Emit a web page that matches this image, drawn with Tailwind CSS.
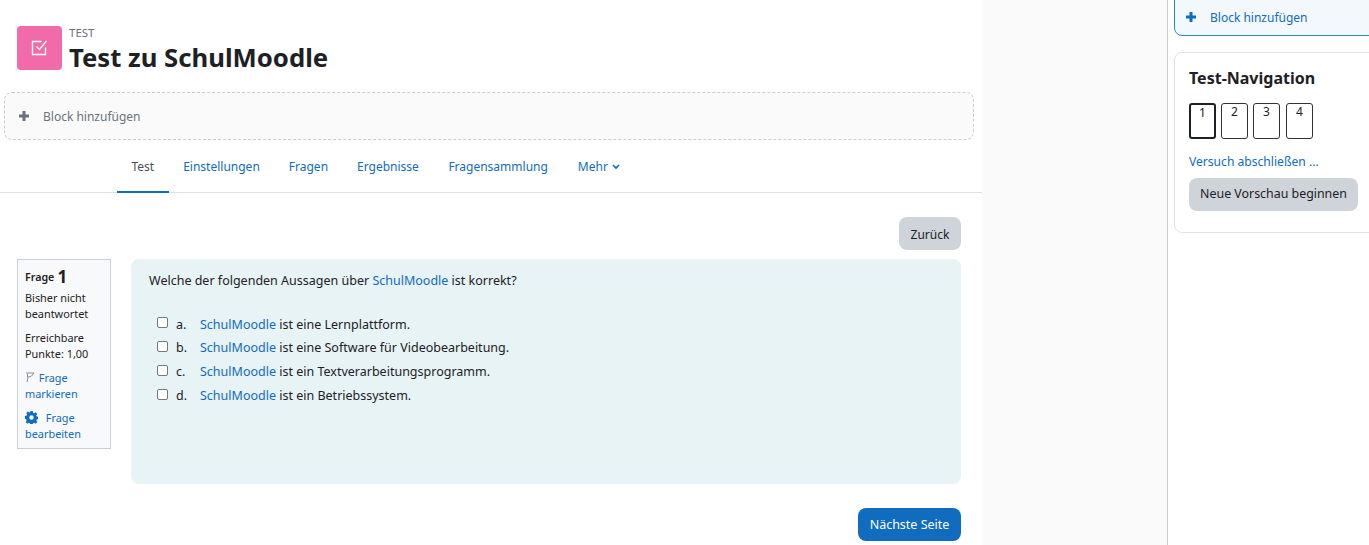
<!DOCTYPE html>
<html lang="de">
<head>
  <meta charset="UTF-8">
  <title>Test zu SchulMoodle</title>
  <script src="https://cdn.jsdelivr.net/npm/@tailwindcss/browser@4"></script>
</head>
<body class="bg-white h-[545px] overflow-hidden font-['Noto_Sans',sans-serif] text-[12.5px] text-[#1d2125]">
  <div class="flex h-[545px]">
    <!-- main column -->
    <div class="w-[982px] shrink-0 bg-white">
      <div class="flex items-start gap-[7px] pl-[17px] pt-[26px]">
        <div class="w-[45px] h-[44px] rounded-[4px] bg-[#f06ba8] flex items-center justify-center">
          <svg width="18" height="18" viewBox="0 0 18 18" fill="none" stroke="#fff" stroke-width="1.4"><path d="M14.5 8.5v7h-13v-13h9"/><path d="M5.500 8l3 3 7-8.500" transform="translate(0 -.5)"/></svg>
        </div>
        <div>
          <div class="text-[11.500px] leading-[14px] text-[#6a737b]">TEST</div>
          <h1 class="text-[25.700px] leading-[35px] font-bold">Test zu SchulMoodle</h1>
        </div>
      </div>

      <div class="mt-[17px] ml-[4px] w-[970px] h-[48px] rounded-[8px] border border-dashed border-[#ccc] bg-[#fafafa] flex items-center pl-[13px] text-[#6a737b] text-[12px]">
        <svg width="12" height="12" viewBox="0 0 12 12" fill="#6a737b"><path d="M4.500 1h3v3.500H11v3H7.500V11h-3V7.500H1v-3h3.500z"/></svg>
        <span class="ml-[13px] pt-[2px]">Block hinzufügen</span>
      </div>

      <nav class="flex h-[53px] border-b border-[#dee2e6] pl-[117px] pt-[2px] text-[#0f6cbf] text-[12px]">
        <a class="relative px-[14.500px] flex items-center text-[#495057]">Test<span class="absolute left-0 right-0 -bottom-px h-[2px] bg-[#0f6cbf]"></span></a>
        <a class="px-[14.500px] flex items-center">Einstellungen</a>
        <a class="px-[14.500px] flex items-center">Fragen</a>
        <a class="px-[14.500px] flex items-center">Ergebnisse</a>
        <a class="pl-[15px] pr-[14.500px] flex items-center">Fragensammlung</a>
        <a class="pl-[15.500px] pr-[14.500px] flex items-center gap-[4px]">Mehr
          <svg width="8" height="6" viewBox="0 0 8 6" fill="none" stroke="#0f6cbf" stroke-width="1.6"><path d="M1 1l3 3 3-3"/></svg>
        </a>
      </nav>

      <div class="flex justify-end pr-[21px] pt-[24px]">
        <button class="h-[33px] w-[62px] rounded-[8px] bg-[#ced4da] text-[12px] pt-[3px]">Zurück</button>
      </div>

      <div class="flex items-start gap-[20px] pl-[17px] pr-[21px] pt-[9px]">
        <div class="w-[94px] h-[190px] shrink-0 border border-[#cad0d7] bg-[#f8f9fa] px-[7px] pt-[7px] text-[10.900px] leading-[16px]">
          <div class="font-semibold flex items-center gap-[3px] h-[20px] text-[10.700px]">Frage <span class="text-[17px] font-bold">1</span></div>
          <div class="mt-[3px]">Bisher nicht beantwortet</div>
          <div class="mt-[8px]">Erreichbare Punkte: 1,00</div>
          <div class="mt-[8px] text-[#0f6cbf]">
            <svg class="inline align-[-1px] mr-[1px]" width="10" height="11" viewBox="0 0 10 11" fill="none" stroke="#8a8f94"><path d="M1 1h8L6 4.500 3 5 2 10"/><path d="M2.500 2v3"/></svg>
            Frage markieren
          </div>
          <div class="mt-[8px] text-[#0f6cbf]">
            <svg class="inline align-[-2px] mr-[5px]" width="13" height="13" viewBox="0 0 13 13" fill="#0f6cbf"><path fill-rule="evenodd" d="M5.300 0h2.400l.4 1.800 1 .4 1.500-1 1.700 1.700-1 1.500.5 1 1.700.4v2.400l-1.700.4-.5 1 1 1.500-1.700 1.700-1.500-1-1 .4-.4 1.800H5.300l-.4-1.800-1-.4-1.500 1-1.700-1.700 1-1.500-.5-1L0 7.400V5l1.700-.4.5-1-1-1.500 1.700-1.700 1.500 1 1-.4zM6.500 4.300a2.200 2.200 0 1 0 0 4.400 2.200 2.200 0 1 0 0-4.400z"/></svg>
            Frage bearbeiten
          </div>
        </div>

        <div class="w-[830px] h-[225px] rounded-[8px] bg-[#e7f3f5] pl-[18px] pt-[12px]">
          <p class="leading-[19px]">Welche der folgenden Aussagen über <a class="text-[#0f6cbf]">SchulMoodle</a> ist korrekt?</p>
          <div class="mt-[23px] pl-[8px] flex flex-col">
            <label class="flex items-center h-[23px] pt-px"><input type="checkbox" class="w-[11px] h-[11px] appearance-none bg-white border border-[#767676] rounded-[2px] -mt-[5px]"><span class="ml-[8px] w-[24px]">a.</span><span><a class="text-[#0f6cbf]">SchulMoodle</a> ist eine Lernplattform.</span></label>
            <label class="flex items-center h-[24px]"><input type="checkbox" class="w-[11px] h-[11px] appearance-none bg-white border border-[#767676] rounded-[2px] -mt-[4px]"><span class="ml-[8px] w-[24px]">b.</span><span><a class="text-[#0f6cbf]">SchulMoodle</a> ist eine Software für Videobearbeitung.</span></label>
            <label class="flex items-center h-[24px]"><input type="checkbox" class="w-[11px] h-[11px] appearance-none bg-white border border-[#767676] rounded-[2px] -mt-[4px]"><span class="ml-[8px] w-[24px]">c.</span><span><a class="text-[#0f6cbf]">SchulMoodle</a> ist ein Textverarbeitungsprogramm.</span></label>
            <label class="flex items-center h-[24px]"><input type="checkbox" class="w-[11px] h-[11px] appearance-none bg-white border border-[#767676] rounded-[2px] -mt-[4px]"><span class="ml-[8px] w-[24px]">d.</span><span><a class="text-[#0f6cbf]">SchulMoodle</a> ist ein Betriebssystem.</span></label>
          </div>
        </div>
      </div>

      <div class="flex justify-end pr-[21px] pt-[24px]">
        <button class="h-[33px] w-[103px] rounded-[8px] bg-[#0f6cbf] text-white pt-[2px]">Nächste Seite</button>
      </div>
    </div>

    <!-- gap next to the drawer -->
    <div class="w-[185px] shrink-0 bg-[#fafafa]"></div>

    <!-- right drawer -->
    <aside class="flex-1 bg-white border-l border-[#ccc] pl-[6px] min-w-0">
      <div class="w-[220px] h-[37px] -mt-px rounded-b-[8px] border border-[#2a83d0] bg-[#f3f8fc] flex items-center pl-[10px] text-[#0f6cbf] text-[12px]">
        <svg class="-mt-px" width="12" height="12" viewBox="0 0 12 12" fill="#0f6cbf"><path d="M4.500 1h3v3.500H11v3H7.500V11h-3V7.500H1v-3h3.500z"/></svg>
        <span class="ml-[13px] pt-[1px]">Block hinzufügen</span>
      </div>
      <div class="mt-[16px] w-[220px] h-[181px] rounded-[8px] border border-[#e2e2e2] pl-[14px] pt-[13px]">
        <h2 class="text-[16px] leading-[24px] font-bold">Test-Navigation</h2>
        <div class="mt-[13px] flex gap-[5px] text-[12px] leading-[16px]">
          <div class="w-[27px] h-[36px] rounded-[3px] border-2 border-[#1d2125] text-center">1</div>
          <div class="w-[27px] h-[36px] rounded-[3px] border border-[#333] text-center">2</div>
          <div class="w-[27px] h-[36px] rounded-[3px] border border-[#333] text-center">3</div>
          <div class="w-[27px] h-[36px] rounded-[3px] border border-[#333] text-center ml-px">4</div>
        </div>
        <a class="block mt-[13px] leading-[19px] text-[#0f6cbf] text-[12.100px]">Versuch abschließen ...</a>
        <button class="mt-[7px] w-[169px] h-[33px] rounded-[8px] bg-[#ced4da] text-[12.400px]">Neue Vorschau beginnen</button>
      </div>
    </aside>
  </div>
</body>
</html>
